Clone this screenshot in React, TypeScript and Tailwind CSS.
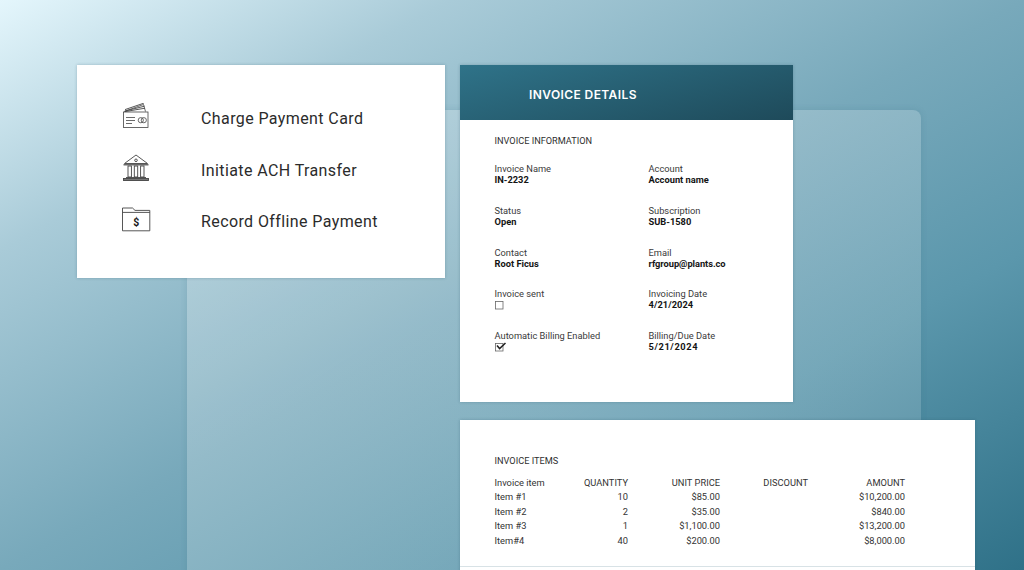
import React from "react";

const CardIcon = () => (
  <svg width="28" height="26" viewBox="0 0 28 26" fill="none" stroke="#444" strokeWidth="0.8" className="shrink-0">
    <rect x="1.5" y="9" width="24.5" height="15.5" />
    <path d="M2 8.5 L21.5 1.5 L23.5 8.5" />
    <path d="M3 6.6 L21.8 0.2 M3 8 L22.5 3.2 M3 8.6 L23 5.2" strokeWidth="0.9" />
    <path d="M4 14.5 H13 M4 17.5 H13 M4 20.5 H10" />
    <circle cx="18.8" cy="17.2" r="2.6" />
    <circle cx="21.8" cy="17.2" r="2.6" />
  </svg>
);

const BankIcon = () => (
  <svg width="28" height="28" viewBox="0 0 28 28" fill="none" stroke="#444" strokeWidth="0.9" className="shrink-0">
    <path d="M2.5 9.5 L14 1 L25.5 9.5 Z" />
    <path d="M1.5 10.8 H26.5" strokeWidth="1.2" />
    <circle cx="14" cy="6.3" r="1.3" />
    <rect x="6" y="12" width="3.4" height="11" />
    <rect x="12.3" y="12" width="3.4" height="11" />
    <rect x="18.6" y="12" width="3.4" height="11" />
    <path d="M4 23.5 H24" />
    <rect x="1.5" y="24.5" width="25" height="2" fill="#777" />
  </svg>
);

const FolderIcon = () => (
  <svg width="29" height="25" viewBox="0 0 29 25" fill="none" stroke="#444" strokeWidth="0.9" className="shrink-0">
    <path d="M0.5 23.8 V1 H10.5 L13 3.4 H27.8 V23.8 Z" />
    <path d="M0.5 5.4 H27.8" />
    <text x="14.2" y="18.6" textAnchor="middle" fontFamily="Roboto, sans-serif" fontWeight="700" fontSize="10.5" fill="#1a1a1a" stroke="none">$</text>
  </svg>
);

const actions = [
  { icon: <CardIcon />, label: "Charge Payment Card" },
  { icon: <BankIcon />, label: "Initiate ACH Transfer" },
  { icon: <FolderIcon />, label: "Record Offline Payment" },
];

const Field = ({ label, value, tracking }: { label: string; value: string; tracking?: string }) => (
  <div className="h-[41.75px] text-[9.3px] leading-[11px]">
    <div className="text-[#3a3a3a]">{label}</div>
    <div className={`font-bold text-[#141414] ${tracking ?? ""}`}>{value}</div>
  </div>
);

const Check = ({ checked }: { checked?: boolean }) => (
  <svg width="12" height="10" viewBox="0 0 12 10" fill="none" className="mt-[1px] block">
    <rect x="0.5" y="1.5" width="7.5" height="7.5" stroke="#666" strokeWidth="0.8" />
    {checked && <path d="M2 3.5 L4.6 6.6 L10.5 1" stroke="#222" strokeWidth="1.5" />}
  </svg>
);

const items = [
  ["Item #1", "10", "$85.00", "", "$10,200.00"],
  ["Item #2", "2", "$35.00", "", "$840.00"],
  ["Item #3", "1", "$1,100.00", "", "$13,200.00"],
  ["Item#4", "40", "$200.00", "", "$8,000.00"],
];

const App = () => {
  return (
    <div
      className="relative h-[570px] w-[1024px] overflow-hidden bg-[linear-gradient(to_bottom_right,#e4f6fc_0%,#a9cbd8_22%,#78a9bb_50%,#5b97ac_72%,#2f7188_100%)]"
      style={{ fontFamily: "Roboto, sans-serif" }}
    >
      {/* frosted panel behind the cards */}
      <div className="absolute left-[187px] top-[110px] h-[480px] w-[734px] rounded-[8px] bg-[linear-gradient(to_bottom_right,rgba(255,255,255,0.26),rgba(255,255,255,0.12))] shadow-[0_0_6px_rgba(60,110,130,0.2)]" />

      <div className="relative flex items-start gap-[15px] pl-[77px] pt-[65px]">
        <div className="flex h-[213px] w-[368px] flex-col gap-[23.5px] bg-white pl-[45px] pt-[37px] shadow-[0_0_3px_rgba(40,80,100,0.3)]">
          {actions.map((a) => (
            <div key={a.label} className="flex h-[28px] items-center">
              <div className="flex w-[79px] items-center">{a.icon}</div>
              <span className="pt-[6px] text-[16px] tracking-[0.4px] text-[#2b2b2b]">{a.label}</span>
            </div>
          ))}
        </div>

        <div className="flex flex-col gap-[18px]">
          <div className="h-[337px] w-[333px] bg-white shadow-[0_0_3px_rgba(40,80,100,0.3)]">
            <div className="flex h-[55px] items-center bg-[linear-gradient(165deg,#2f7389_0%,#1e4a5a_100%)] pl-[69px] pt-[4px]">
              <span className="text-[12px] font-semibold tracking-[0.4px] text-white" style={{ fontFamily: "Inter, sans-serif" }}>
                INVOICE DETAILS
              </span>
            </div>
            <div className="pl-[34.5px] pt-[15px]">
              <div className="text-[9.2px] leading-[11px] text-[#2f2f2f]">INVOICE INFORMATION</div>
              <div className="mt-[17px] grid grid-cols-[154px_1fr]">
                <Field label="Invoice Name" value="IN-2232" />
                <Field label="Account" value="Account name" />
                <Field label="Status" value="Open" />
                <Field label="Subscription" value="SUB-1580" />
                <Field label="Contact" value="Root Ficus" />
                <Field label="Email" value="rfgroup@plants.co" tracking="tracking-[-0.05px]" />
                <div className="h-[41.75px] text-[9.3px] leading-[11px] text-[#3a3a3a]">
                  Invoice sent
                  <Check />
                </div>
                <Field label="Invoicing Date" value="4/21/2024" tracking="tracking-[0.05px]" />
                <div className="h-[41.75px] text-[9.3px] leading-[11px] text-[#3a3a3a]">
                  Automatic Billing Enabled
                  <Check checked />
                </div>
                <Field label="Billing/Due Date" value="5/21/2024" tracking="tracking-[0.6px]" />
              </div>
            </div>
          </div>

          <div className="h-[170px] w-[515px] bg-white shadow-[0_0_3px_rgba(40,80,100,0.3)]">
            <div className="h-[147px] border-b border-[#d8e2e6] pl-[34.5px] pt-[35px]">
              <div className="text-[9.2px] leading-[11px] text-[#2f2f2f]">INVOICE ITEMS</div>
              <div className="mt-[9.5px] grid w-[410.5px] grid-cols-[63.5px_70px_92px_88px_97px] text-[9.3px] leading-[14.5px] text-[#333]">
                <div>Invoice item</div>
                <div className="text-right">QUANTITY</div>
                <div className="text-right">UNIT PRICE</div>
                <div className="text-right">DISCOUNT</div>
                <div className="text-right">AMOUNT</div>
                {items.map((row) =>
                  row.map((cell, i) => (
                    <div key={row[0] + i} className={i === 0 ? "" : "text-right"}>
                      {cell}
                    </div>
                  )),
                )}
              </div>
            </div>
          </div>
        </div>
      </div>
    </div>
  );
};

export default App;
